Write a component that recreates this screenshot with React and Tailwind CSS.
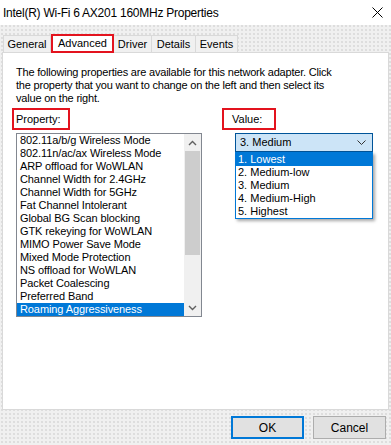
import React from "react";

const properties = [
  "802.11a/b/g Wireless Mode",
  "802.11n/ac/ax Wireless Mode",
  "ARP offload for WoWLAN",
  "Channel Width for 2.4GHz",
  "Channel Width for 5GHz",
  "Fat Channel Intolerant",
  "Global BG Scan blocking",
  "GTK rekeying for WoWLAN",
  "MIMO Power Save Mode",
  "Mixed Mode Protection",
  "NS offload for WoWLAN",
  "Packet Coalescing",
  "Preferred Band",
  "Roaming Aggressiveness",
];

const values = ["1. Lowest", "2. Medium-low", "3. Medium", "4. Medium-High", "5. Highest"];

const tabs = [
  { name: "General", w: "w-[48px]" },
  { name: "Advanced", w: "w-[63px]", active: true },
  { name: "Driver", w: "w-[39px]" },
  { name: "Details", w: "w-[45px]" },
  { name: "Events", w: "w-[43px]" },
];

function Chevron({ up }) {
  return (
    <svg width="9" height="6" viewBox="0 0 9 6">
      <path
        d={up ? "M1 5 L4.5 1.5 L8 5" : "M1 1 L4.5 4.5 L8 1"}
        fill="none"
        stroke="#606060"
        strokeWidth="1.4"
      />
    </svg>
  );
}

export default function App() {
  return (
    <div className="w-[391px] h-[445px] overflow-hidden flex flex-col bg-[#f0f0f0] bg-[radial-gradient(circle,#dcdcdc_0.7px,transparent_0.8px)] bg-[length:4px_4px] font-['Liberation_Sans',Arial,sans-serif] text-[11px] text-black">
      {/* Titelleiste */}
      <div className="h-[25px] bg-white flex items-center justify-between pl-[3px] pr-[8px]">
        <span className="text-[12px] leading-none tracking-[-0.25px]">Intel(R) Wi-Fi 6 AX201 160MHz Properties</span>
        <svg width="11" height="11" viewBox="0 0 11 11">
          <path d="M0.5 0.5 L10.5 10.5 M10.5 0.5 L0.5 10.5" stroke="#000" strokeWidth="1" />
        </svg>
      </div>

      {/* Tabs */}
      <div className="flex items-end pl-[3px] mt-[8px] h-[19px]">
        {tabs.map((t) =>
          t.active ? (
            <div
              key={t.name}
              className={`${t.w} h-[19px] border-2 border-[#e3131e] bg-white flex items-center justify-center relative z-10 -mb-[1px]`}
            >
              {t.name}
            </div>
          ) : (
            <div
              key={t.name}
              className={`${t.w} h-[17px] border border-b-0 border-[#d9d9d9] -ml-[1px] first:ml-0 bg-[#f0f0f0] flex items-center justify-center`}
            >
              {t.name}
            </div>
          )
        )}
      </div>

      {/* Panel */}
      <div className="mx-[2px] h-[358px] border border-[#d9d9d9] bg-white">
        <p className="pt-[13px] pl-[13px] leading-[13px] tracking-[-0.2px]">
          The following properties are available for this network adapter. Click
          <br />
          the property that you want to change on the left and then select its
          <br />
          value on the right.
        </p>

        <div className="flex mt-[3px] pl-[9px]">
          {/* Property */}
          <div className="w-[210px]">
            <div className="w-[58px] h-[22px] border-2 border-[#e3131e] pl-[2px] flex items-center">Property:</div>
            <div className="ml-[4px] mt-[3px] w-[186px] h-[184px] border border-[#828790] flex">
              <div className="flex-1 tracking-[-0.1px]">
                {properties.map((p, i) => (
                  <div
                    key={p}
                    className={`h-[13px] leading-[13px] px-[3px] whitespace-nowrap ${
                      i === properties.length - 1 ? "bg-[#0078d7] text-white" : ""
                    }`}
                  >
                    {p}
                  </div>
                ))}
              </div>
              <div className="w-[17px] bg-[#f0f0f0] flex flex-col">
                <div className="h-[17px] flex items-center justify-center">
                  <Chevron up />
                </div>
                <div className="mx-[1px] h-[104px] bg-[#cdcdcd]" />
                <div className="flex-1" />
                <div className="h-[17px] flex items-center justify-center">
                  <Chevron />
                </div>
              </div>
            </div>
          </div>

          {/* Value */}
          <div>
            <div className="w-[54px] h-[22px] border-2 border-[#e3131e] pl-[8px] flex items-center">Value:</div>
            <div className="ml-[13px] mt-[3px] w-[138px] h-[19px] relative">
              <div className="h-full border border-[#005499] bg-[#cce4f7] flex items-center justify-between pl-[4px] pr-[6px]">
                <span>3. Medium</span>
                <svg width="9" height="5" viewBox="0 0 9 5">
                  <path d="M0.5 0.5 L4.5 4.5 L8.5 0.5" fill="none" stroke="#333" strokeWidth="1" />
                </svg>
              </div>
              <div className="absolute left-0 top-[19px] w-[138px] border border-[#0078d7] bg-white shadow-[2px_2px_3px_rgba(0,0,0,0.35)] z-20">
                {values.map((v, i) => (
                  <div
                    key={v}
                    className={`h-[13px] leading-[13px] px-[2px] ${i === 0 ? "bg-[#0078d7] text-white" : ""}`}
                  >
                    {v}
                  </div>
                ))}
              </div>
            </div>
          </div>
        </div>
      </div>

      {/* Buttons */}
      <div className="flex justify-end gap-[9px] pr-[5px] mt-[6px]">
        <button className="w-[73px] h-[23px] border-2 border-[#0078d7] bg-[#e1e1e1] text-[12px]">OK</button>
        <button className="w-[73px] h-[23px] border border-[#adadad] bg-[#e1e1e1] text-[12px]">Cancel</button>
      </div>
    </div>
  );
}
